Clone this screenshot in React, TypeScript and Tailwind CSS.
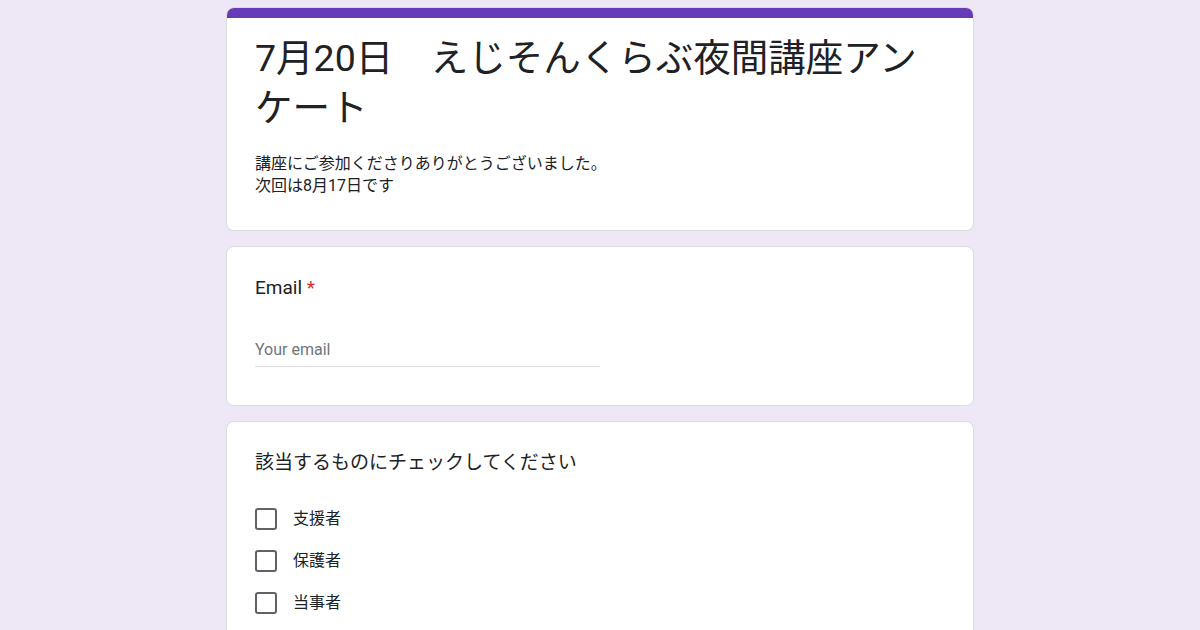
import React from 'react';

const options = ['支援者', '保護者', '当事者'];

function Card({ children, accent = false }: { children: React.ReactNode; accent?: boolean }) {
  return (
    <div className="bg-white rounded-lg border border-[#dadce0] overflow-hidden">
      {accent && <div className="h-[10px] bg-[#673ab7]" />}
      {children}
    </div>
  );
}

export default function App() {
  return (
    <div
      className="min-h-screen bg-[#ede7f6] text-[#202124] overflow-hidden"
      style={{ fontFamily: 'Roboto, "Noto Sans CJK JP", sans-serif' }}
    >
      <div className="w-[748px] mx-auto pt-[7px] flex flex-col gap-[15px]">
        <Card accent>
          <div className="px-[28px] pt-[15px] pb-[33px]">
            <h1 className="text-[37.5px] leading-[50px] font-normal max-w-[680px]">
              7月20日　えじそんくらぶ夜間講座アンケート
            </h1>
            <p className="mt-5 text-[16px] leading-[22px]">
              講座にご参加くださりありがとうございました。
              <br />
              次回は8月17日です
            </p>
          </div>
        </Card>

        <Card>
          <div className="px-[28px] pt-[29px] pb-[38px]">
            <div className="text-[19px] leading-6">
              Email <span className="text-[#d93025]">*</span>
            </div>
            <div className="mt-[35px] w-[345px] h-8 flex items-end border-b border-[#e0e0e0]">
              <span className="text-[16px] leading-6 text-[#70757a] pb-1">Your email</span>
            </div>
          </div>
        </Card>

        <Card>
          <div className="px-[28px] pt-[29px] pb-8">
            <div className="text-[19px] leading-6">該当するものにチェックしてください</div>
            <div className="mt-[33px] flex flex-col gap-[20px]">
              {options.map((o) => (
                <label key={o} className="flex items-center gap-4 h-[22px]">
                  <span className="w-[22px] h-[22px] rounded-[3px] border-2 border-[#5f6368]" />
                  <span className="text-[16px] leading-[22px]">{o}</span>
                </label>
              ))}
            </div>
          </div>
        </Card>
      </div>
    </div>
  );
}
